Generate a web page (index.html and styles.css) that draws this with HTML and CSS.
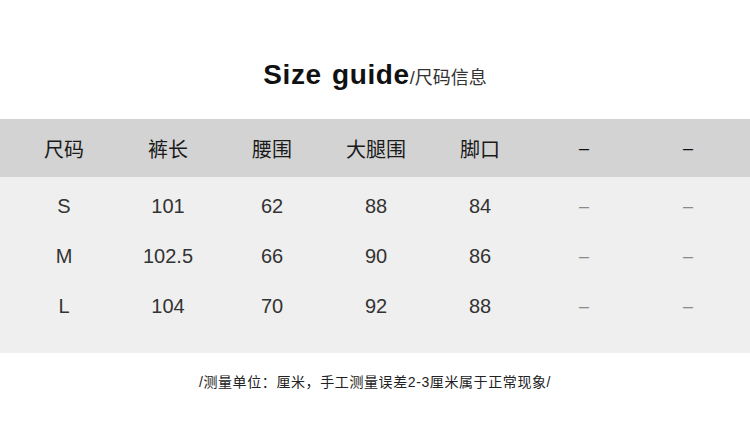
FILE: index.html
```html
<!DOCTYPE html>
<html lang="zh">
<head>
<meta charset="utf-8">
<title>Size guide</title>
<link rel="stylesheet" href="styles.css">
</head>
<body>
<div class="page">
  <h1 class="title"><span class="title-en">Size guide</span><span class="title-cn">/尺码信息</span></h1>
  <div class="table">
    <div class="row head">
      <div class="cell">尺码</div>
      <div class="cell">裤长</div>
      <div class="cell">腰围</div>
      <div class="cell">大腿围</div>
      <div class="cell">脚口</div>
      <div class="cell dash">–</div>
      <div class="cell dash">–</div>
    </div>
    <div class="body">
      <div class="row">
        <div class="cell">S</div>
        <div class="cell">101</div>
        <div class="cell">62</div>
        <div class="cell">88</div>
        <div class="cell">84</div>
        <div class="cell dash">–</div>
        <div class="cell dash">–</div>
      </div>
      <div class="row">
        <div class="cell">M</div>
        <div class="cell">102.5</div>
        <div class="cell">66</div>
        <div class="cell">90</div>
        <div class="cell">86</div>
        <div class="cell dash">–</div>
        <div class="cell dash">–</div>
      </div>
      <div class="row">
        <div class="cell">L</div>
        <div class="cell">104</div>
        <div class="cell">70</div>
        <div class="cell">92</div>
        <div class="cell">88</div>
        <div class="cell dash">–</div>
        <div class="cell dash">–</div>
      </div>
    </div>
  </div>
  <p class="note">/测量单位：厘米，手工测量误差2-3厘米属于正常现象/</p>
</div>
</body>
</html>
```

FILE: styles.css
```css
html, body {
  margin: 0;
  padding: 0;
  background: #ffffff;
}

body {
  font-family: "Liberation Sans", "Noto Sans CJK SC", sans-serif;
  color: #222;
  width: 750px;
  height: 431px;
  overflow: hidden;
}

.title {
  margin: 0;
  padding-top: 55px;
  height: 64px;
  line-height: 36px;
  text-align: center;
  font-weight: normal;
}

.title-en {
  font-size: 28px;
  font-weight: bold;
  color: #111;
  letter-spacing: 0.6px;
  word-spacing: 2px;
}

.title-cn {
  font-size: 18px;
  color: #333;
}

.row {
  display: grid;
  grid-template-columns: repeat(7, 104px);
  padding-left: 12px;
  align-items: center;
}

.cell {
  text-align: center;
}

.head {
  background: #d3d3d3;
  height: 58px;
  font-size: 20px;
  color: #1a1a1a;
}

.head .dash {
  color: #111;
  font-size: 18px;
}

.body {
  background: #efefef;
  padding-top: 4px;
  padding-bottom: 22px;
}

.body .row {
  height: 50px;
  font-size: 20px;
  color: #333;
}

.body .dash {
  color: #8a8a8a;
  font-size: 18px;
}

.note {
  margin: 19px 0 0;
  font-size: 14px;
  line-height: 20px;
  letter-spacing: 0.6px;
  text-align: center;
  color: #222;
}
```
